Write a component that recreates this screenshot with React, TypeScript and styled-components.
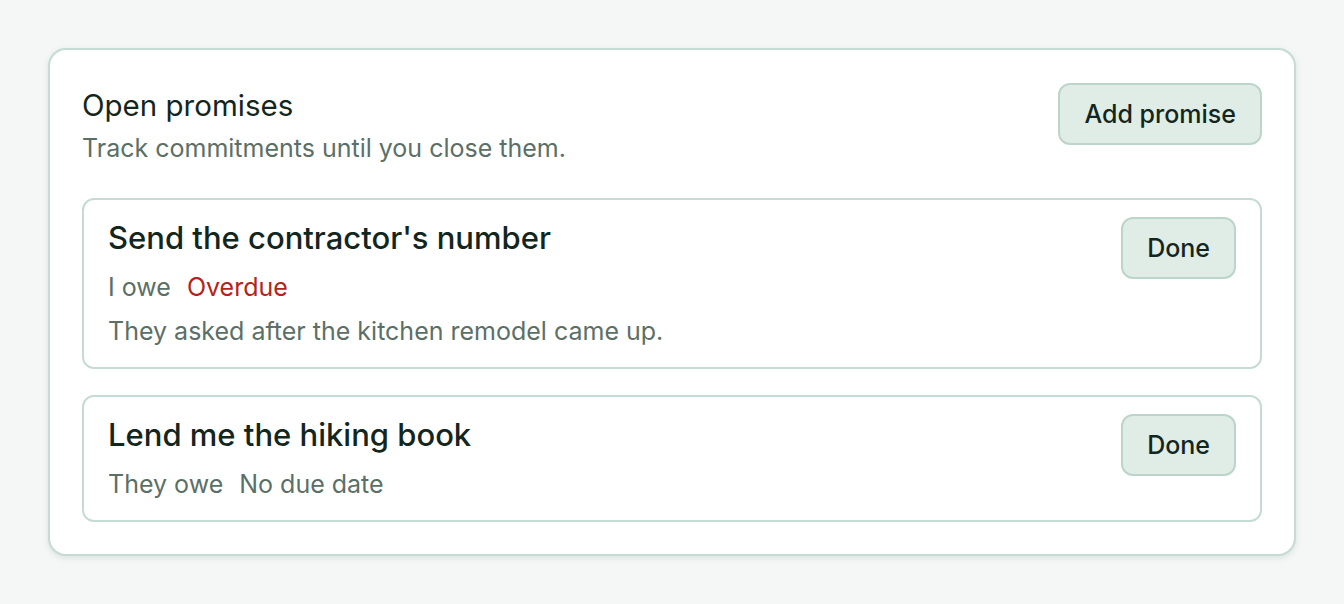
import styled, { createGlobalStyle } from 'styled-components';

const GlobalStyle = createGlobalStyle`
  * {
    box-sizing: border-box;
  }
  body {
    margin: 0;
    background: #f4f7f6;
    font-family: Inter, 'Noto Sans', sans-serif;
    color: #13261e;
  }
`;

const Page = styled.main`
  padding: 48px;
`;

const Panel = styled.section`
  background: #ffffff;
  border: 2px solid #c5dbd3;
  border-radius: 18px;
  box-shadow: 0 2px 6px rgba(40, 80, 60, 0.12);
  padding: 33px 32px 32px;
`;

const Header = styled.header`
  display: flex;
  justify-content: space-between;
  align-items: flex-start;
  margin-bottom: 33px;
`;

const Heading = styled.h2`
  margin: 0;
  font-size: 29.5px;
  line-height: 44px;
  font-weight: 400;
  color: #13261e;
`;

const Subtitle = styled.p`
  margin: 4px 0 0;
  font-size: 25px;
  line-height: 34px;
  color: #5b6f67;
`;

const Button = styled.button`
  font-family: inherit;
  font-size: 25px;
  font-weight: 500;
  color: #13261e;
  background: #e0ece6;
  border: 2px solid #bcd5cb;
  border-radius: 12px;
  height: 62px;
  padding: 0 24px;
  cursor: pointer;
  flex-shrink: 0;
`;

const List = styled.ul`
  list-style: none;
  margin: 0;
  padding: 0;
  display: flex;
  flex-direction: column;
  gap: 26px;
`;

const Item = styled.li`
  display: flex;
  justify-content: space-between;
  align-items: flex-start;
  border: 2px solid #c5dbd3;
  border-radius: 12px;
  padding: 20px 24px 21px;
`;

const ItemBody = styled.div`
  display: flex;
  flex-direction: column;
`;

const ItemTitle = styled.h3`
  margin: 0;
  font-size: 31px;
  line-height: 36px;
  font-weight: 500;
  color: #13261e;
`;

const Meta = styled.div`
  display: flex;
  gap: 16px;
  margin-top: 16px;
  font-size: 25px;
  line-height: 30px;
`;

const Tag = styled.span<{ $tone?: 'danger' | 'muted' }>`
  color: ${(p) => (p.$tone === 'danger' ? '#b4231a' : '#5b6f67')};
`;

const Note = styled.p`
  margin: 14px 0 0;
  font-size: 25px;
  line-height: 30px;
  color: #5b6f67;
`;

const ItemAction = styled.div`
  margin-top: -3px;
`;

type Promise = {
  title: string;
  who: string;
  due: string;
  overdue?: boolean;
  note?: string;
};

const promises: Promise[] = [
  {
    title: "Send the contractor's number",
    who: 'I owe',
    due: 'Overdue',
    overdue: true,
    note: 'They asked after the kitchen remodel came up.',
  },
  {
    title: 'Lend me the hiking book',
    who: 'They owe',
    due: 'No due date',
  },
];

export default function App() {
  return (
    <>
      <GlobalStyle />
      <Page>
        <Panel>
          <Header>
            <div>
              <Heading>Open promises</Heading>
              <Subtitle>Track commitments until you close them.</Subtitle>
            </div>
            <Button>Add promise</Button>
          </Header>
          <List>
            {promises.map((p) => (
              <Item key={p.title}>
                <ItemBody>
                  <ItemTitle>{p.title}</ItemTitle>
                  <Meta>
                    <Tag>{p.who}</Tag>
                    <Tag $tone={p.overdue ? 'danger' : 'muted'}>{p.due}</Tag>
                  </Meta>
                  {p.note && <Note>{p.note}</Note>}
                </ItemBody>
                <ItemAction>
                  <Button>Done</Button>
                </ItemAction>
              </Item>
            ))}
          </List>
        </Panel>
      </Page>
    </>
  );
}
